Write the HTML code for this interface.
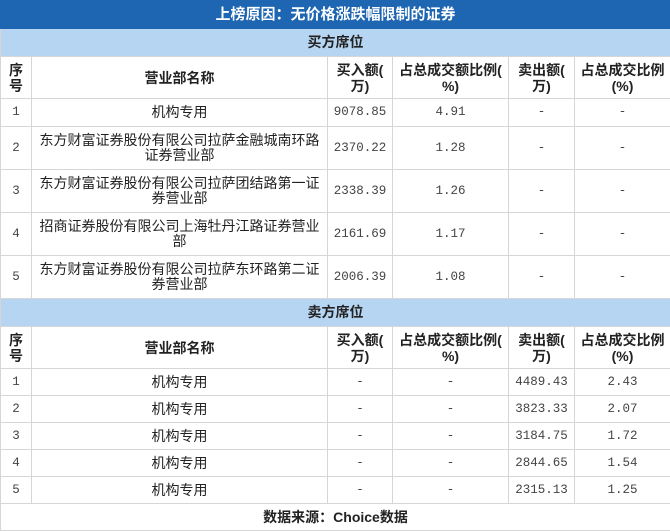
<!DOCTYPE html>
<html><head><meta charset="utf-8"><style>
body{margin:0;width:670px;height:531px;overflow:hidden;background:#fff;font-family:"Liberation Sans","Noto Sans CJK SC",sans-serif;color:#222}
table{border-collapse:collapse;table-layout:fixed;width:670px}
td{border:1px solid #d6d6d6;text-align:center;font-size:14px;padding:0 1px;line-height:15px;overflow:hidden;word-break:break-all}
.t td{background:#1e66b1;color:#fff;font-weight:bold;font-size:15px;height:27px;border-color:#1e66b1}
.s td{background:#b5d5f2;font-weight:bold;font-size:14px;height:27px}
.h td{font-weight:bold;height:41px;line-height:16px;white-space:nowrap}
.h td.q{padding:0 7px}
.n{font-family:"Liberation Mono","Noto Serif CJK SC",monospace;color:#444;font-size:12.5px}
.r1 td{height:27px}
.r2 td{height:42px}
.r3 td{height:26px}
.f td{height:26px;font-weight:bold;font-size:14px}
</style></head><body>
<table>
<colgroup><col style="width:31px"><col style="width:296px"><col style="width:65px"><col style="width:116px"><col style="width:66px"><col style="width:96px"></colgroup>
<tr class="t"><td colspan="6">上榜原因：无价格涨跌幅限制的证券</td></tr>
<tr class="s"><td colspan="6">买方席位</td></tr>
<tr class="h"><td class="q">序<br>号</td><td>营业部名称</td><td>买入额(<br>万)</td><td>占总成交额比例(<br>%)</td><td>卖出额(<br>万)</td><td>占总成交比例<br>(%)</td></tr>
<tr class="r1"><td class="n">1</td><td>机构专用</td><td class="n">9078.85</td><td class="n">4.91</td><td class="n">-</td><td class="n">-</td></tr>
<tr class="r2"><td class="n">2</td><td>东方财富证券股份有限公司拉萨金融城南环路证券营业部</td><td class="n">2370.22</td><td class="n">1.28</td><td class="n">-</td><td class="n">-</td></tr>
<tr class="r2"><td class="n">3</td><td>东方财富证券股份有限公司拉萨团结路第一证券营业部</td><td class="n">2338.39</td><td class="n">1.26</td><td class="n">-</td><td class="n">-</td></tr>
<tr class="r2"><td class="n">4</td><td>招商证券股份有限公司上海牡丹江路证券营业部</td><td class="n">2161.69</td><td class="n">1.17</td><td class="n">-</td><td class="n">-</td></tr>
<tr class="r2"><td class="n">5</td><td>东方财富证券股份有限公司拉萨东环路第二证券营业部</td><td class="n">2006.39</td><td class="n">1.08</td><td class="n">-</td><td class="n">-</td></tr>
<tr class="s"><td colspan="6">卖方席位</td></tr>
<tr class="h"><td class="q">序<br>号</td><td>营业部名称</td><td>买入额(<br>万)</td><td>占总成交额比例(<br>%)</td><td>卖出额(<br>万)</td><td>占总成交比例<br>(%)</td></tr>
<tr class="r3"><td class="n">1</td><td>机构专用</td><td class="n">-</td><td class="n">-</td><td class="n">4489.43</td><td class="n">2.43</td></tr>
<tr class="r3"><td class="n">2</td><td>机构专用</td><td class="n">-</td><td class="n">-</td><td class="n">3823.33</td><td class="n">2.07</td></tr>
<tr class="r3"><td class="n">3</td><td>机构专用</td><td class="n">-</td><td class="n">-</td><td class="n">3184.75</td><td class="n">1.72</td></tr>
<tr class="r3"><td class="n">4</td><td>机构专用</td><td class="n">-</td><td class="n">-</td><td class="n">2844.65</td><td class="n">1.54</td></tr>
<tr class="r3"><td class="n">5</td><td>机构专用</td><td class="n">-</td><td class="n">-</td><td class="n">2315.13</td><td class="n">1.25</td></tr>
<tr class="f"><td colspan="6">数据来源：Choice数据</td></tr>
</table>
</body></html>
